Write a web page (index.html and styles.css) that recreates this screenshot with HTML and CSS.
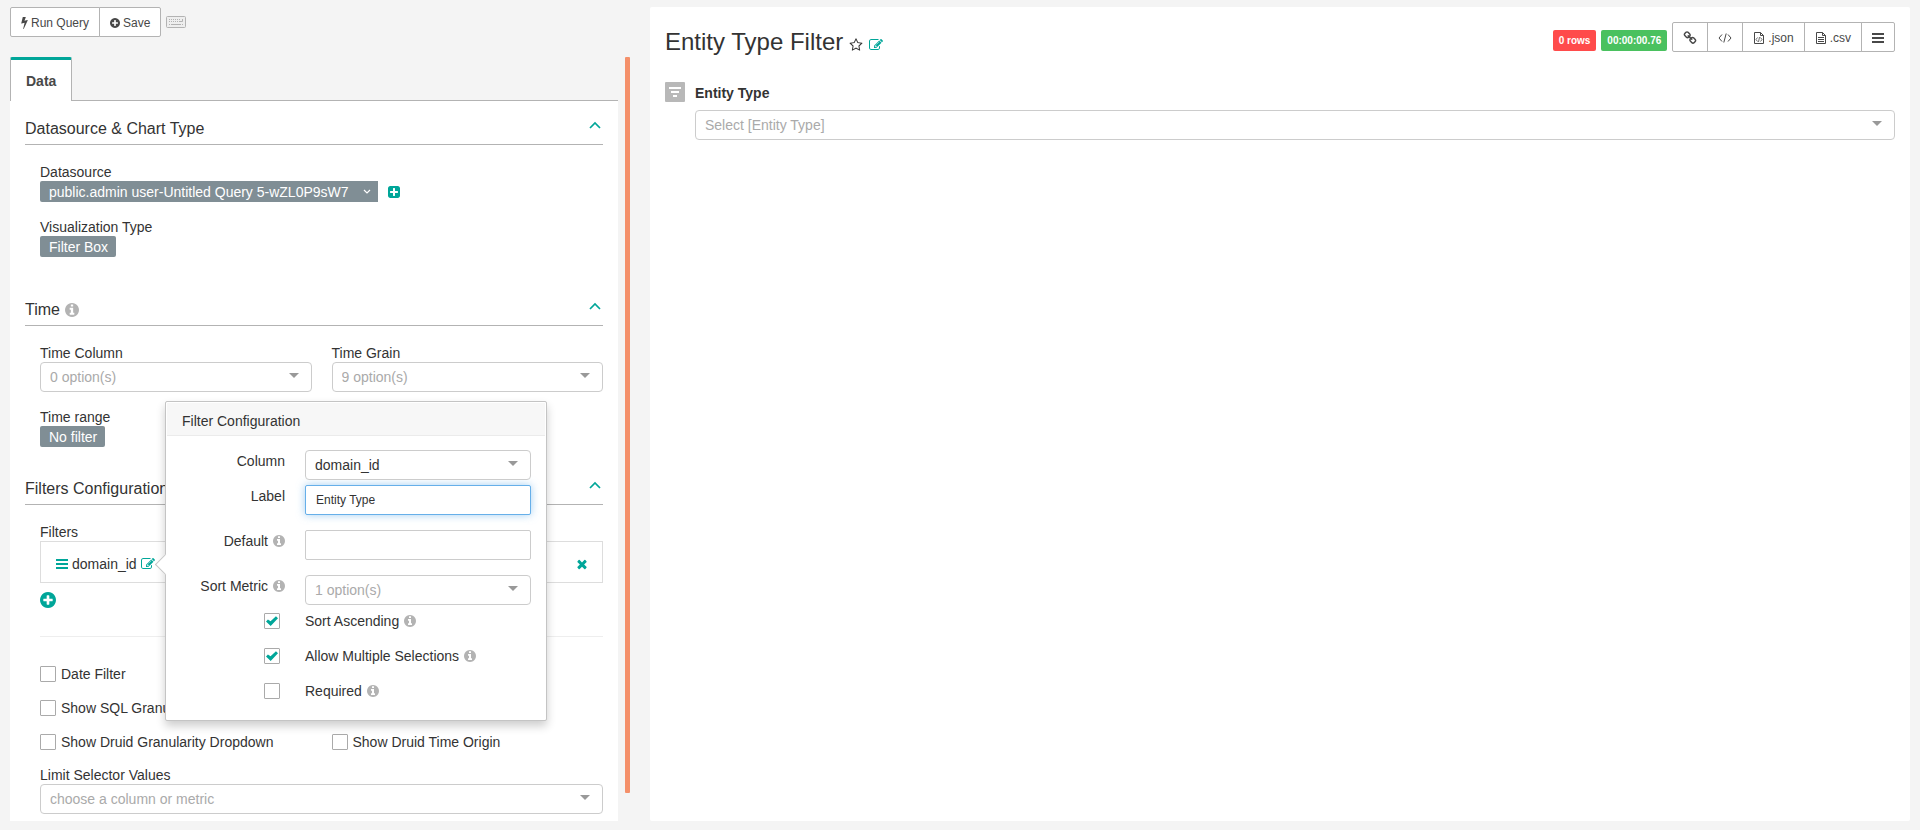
FILE: index.html
```html
<!DOCTYPE html>
<html lang="en">
<head>
<meta charset="utf-8">
<title>Entity Type Filter</title>
<link rel="stylesheet" href="styles.css">
</head>
<body>
<svg class="sprite" aria-hidden="true">
  <symbol id="i-bolt" viewBox="448 128 896 1664"><path d="M1333 566q18 20 7 44l-540 1157q-13 25-42 25-4 0-14-2-17-5-25.500-19t-4.500-30l197-808-406 101q-4 1-12 1-18 0-31-11-18-15-13-39l201-825q4-14 16-23t28-9h328q19 0 32 12.500t13 29.500q0 8-5 18l-171 463 396-98q8-2 12-2 19 0 34 15z"/></symbol>
  <symbol id="i-plus-circle" viewBox="128 128 1536 1536"><path d="M1344 960v-128q0-26-19-45t-45-19h-256v-256q0-26-19-45t-45-19h-128q-26 0-45 19t-19 45v256h-256q-26 0-45 19t-19 45v128q0 26 19 45t45 19h256v256q0 26 19 45t45 19h128q26 0 45-19t19-45v-256h256q26 0 45-19t19-45zm320-64q0 209-103 385.500t-279.500 279.500-385.500 103-385.500-103-279.500-279.500-103-385.500 103-385.500 279.500-279.500 385.500-103 385.500 103 279.500 279.500 103 385.500z"/></symbol>
  <symbol id="i-info" viewBox="128 128 1536 1536"><path d="M1152 1376v-160q0-14-9-23t-23-9h-96v-512q0-14-9-23t-23-9h-320q-14 0-23 9t-9 23v160q0 14 9 23t23 9h96v320h-96q-14 0-23 9t-9 23v160q0 14 9 23t23 9h448q14 0 23-9t9-23zm-128-896v-160q0-14-9-23t-23-9h-192q-14 0-23 9t-9 23v160q0 14 9 23t23 9h192q14 0 23-9t9-23zm640 416q0 209-103 385.500t-279.500 279.500-385.500 103-385.500-103-279.500-279.500-103-385.500 103-385.500 279.500-279.500 385.500-103 385.500 103 279.500 279.500 103 385.500z"/></symbol>
  <symbol id="i-plus-square" viewBox="128 128 1536 1536"><path d="M1408 960v-128q0-26-19-45t-45-19h-320v-320q0-26-19-45t-45-19h-128q-26 0-45 19t-19 45v320h-320q-26 0-45 19t-19 45v128q0 26 19 45t45 19h320v320q0 26 19 45t45 19h128q26 0 45-19t19-45v-320h320q26 0 45-19t19-45zm256-544v960q0 119-84.500 203.500t-203.500 84.500h-960q-119 0-203.500-84.500t-84.500-203.500v-960q0-119 84.500-203.500t203.500-84.500h960q119 0 203.500 84.500t84.500 203.500z"/></symbol>
  <symbol id="i-edit" viewBox="0 0 1792 1792"><path d="M888 1184l116-116-152-152-116 116v56h96v96h56zm440-720q-16-16-33 1l-350 350q-17 17-1 33t33-1l350-350q17-17 1-33zm80 594v190q0 119-84.500 203.500t-203.500 84.500h-832q-119 0-203.500-84.500t-84.500-203.500v-832q0-119 84.500-203.500t203.500-84.500h832q63 0 117 25 15 7 18 23 3 17-9 29l-49 49q-14 14-32 8-23-6-45-6h-832q-66 0-113 47t-47 113v832q0 66 47 113t113 47h832q66 0 113-47t47-113v-126q0-13 9-22l64-64q15-15 35-7t20 29zm-96-738l288 288-672 672h-288v-288zm444 132l-92 92-288-288 92-92q28-28 68-28t68 28l152 152q28 28 28 68t-28 68z"/></symbol>
  <symbol id="i-star" viewBox="0 0 1792 1792"><path d="M1201 1004l306-297-422-62-189-382-189 382-422 62 306 297-73 421 378-199 377 199zm527-357q0 22-26 48l-363 354 86 500q1 7 1 20 0 50-41 50-19 0-40-12l-449-236-449 236q-22 12-40 12-21 0-31.500-14.500t-10.500-35.500q0-6 2-20l86-500-364-354q-25-27-25-48 0-37 56-46l502-73 225-455q19-41 49-41t49 41l225 455 502 73q56 9 56 46z"/></symbol>
  <symbol id="i-times" viewBox="0 0 1792 1792"><path d="M1490 1322q0 40-28 68l-136 136q-28 28-68 28t-68-28l-294-294-294 294q-28 28-68 28t-68-28l-136-136q-28-28-28-68t28-68l294-294-294-294q-28-28-28-68t28-68l136-136q28-28 68-28t68 28l294 294 294-294q28-28 68-28t68 28l136 136q28 28 28 68t-28 68l-294 294 294 294q28 28 28 68z"/></symbol>
  <symbol id="i-link" viewBox="0 0 1792 1792"><path d="M1520 1216q0-40-28-68l-208-208q-28-28-68-28-42 0-72 32 3 3 19 18.500t21.500 21.500 15 19 13 25.500 3.500 27.500q0 40-28 68t-68 28q-15 0-27.500-3.500t-25.500-13-19-15-21.500-21.500-18.500-19q-33 31-33 73 0 40 28 68l206 207q27 27 68 27 40 0 68-26l147-146q28-28 28-67zm-703-705q0-40-28-68l-206-207q-28-28-68-28-39 0-68 27l-147 146q-28 28-28 67 0 40 28 68l208 208q27 27 68 27 42 0 72-31-3-3-19-18.500t-21.500-21.500-15-19-13-25.500-3.500-27.500q0-40 28-68t68-28q15 0 27.500 3.500t25.500 13 19 15 21.500 21.500 18.500 19q33-31 33-73zm895 705q0 120-85 203l-147 146q-83 83-203 83-121 0-204-85l-206-207q-83-83-83-203 0-123 88-209l-88-88q-86 88-208 88-120 0-204-84l-208-208q-84-84-84-204t85-203l147-146q83-83 203-83 121 0 204 85l206 207q83 83 83 203 0 123-88 209l88 88q86-88 208-88 120 0 204 84l208 208q84 84 84 204z"/></symbol>
  <symbol id="i-bars" viewBox="0 0 12 12"><path d="M0 1h12v2H0zM0 5h12v2H0zM0 9h12v2H0z"/></symbol>
  <symbol id="i-code" viewBox="0 0 14 12"><path d="M4 2.500L1 6l3 3.500M10 2.500L13 6l-3 3.500M8.200 1.500L5.800 10.500" fill="none" stroke="currentColor"/></symbol>
  <symbol id="i-file-code" viewBox="0 0 12 14"><path d="M1.500 1.500h6l3 3v8h-9zM7.500 1.500v3h3" fill="none" stroke="currentColor"/><path d="M4.500 6.500L3 8.500l1.500 2M7.500 6.500l1.500 2-1.500 2M6.500 6L5.500 11" fill="none" stroke="currentColor" stroke-width=".8"/></symbol>
  <symbol id="i-file-text" viewBox="0 0 12 14"><path d="M1.500 1.500h6l3 3v8h-9zM7.500 1.500v3h3M3 6.500h6M3 8.500h6M3 10.500h6" fill="none" stroke="currentColor"/></symbol>
  <symbol id="i-keyboard" viewBox="0 0 20 12"><rect x=".5" y=".5" width="19" height="11" rx="1" fill="#eee" stroke="currentColor"/><path d="M3 3.500h12M3 5.500h12" fill="none" stroke="currentColor" stroke-dasharray="1 1"/><path d="M3 8.500h1M5 8.500h10M16 8.500h1M14 5.500h2.500V3" fill="none" stroke="currentColor"/></symbol>
  <symbol id="i-up" viewBox="0 0 12 8"><path d="M1 7l5-5 5 5" fill="none" stroke="currentColor" stroke-width="1.700"/></symbol>
  <symbol id="i-down" viewBox="0 0 8 6"><path d="M1 1l3 3 3-3" fill="none" stroke="currentColor" stroke-width="1.200"/></symbol>
  <symbol id="i-filter" viewBox="0 0 20 20"><rect width="20" height="20" rx="1" fill="#b8b8b8"/><path d="M4 5h12v2H4zM6 9h8v2H6zM8 13h4v2H8z" fill="#fff"/></symbol>
</svg>

<main class="explore">
  <section class="controls">
    <div class="toolbar">
      <div class="btn-group">
        <button class="btn" type="button"><svg class="icon bolt"><use href="#i-bolt"/></svg>Run Query</button>
        <button class="btn" type="button"><svg class="icon sm"><use href="#i-plus-circle"/></svg>Save</button>
      </div>
      <svg class="keyboard"><use href="#i-keyboard"/></svg>
    </div>

    <div class="control-area">
      <div class="tabs">
        <div class="tab-list" role="tablist">
          <button class="tab" type="button" role="tab" aria-selected="true">Data</button>
        </div>

        <div class="tab-content" role="tabpanel">
          <section class="panel datasource">
            <h2 class="panel-head">Datasource &amp; Chart Type<svg class="chevron"><use href="#i-up"/></svg></h2>
            <div class="panel-body">
              <div class="field">
                <span class="caption">Datasource</span>
                <div class="source-row">
                  <button class="tag tag-menu" type="button">public.admin user-Untitled Query 5-wZL0P9sW7<svg class="caret"><use href="#i-down"/></svg></button>
                  <button class="icon-btn" type="button" aria-label="Add"><svg class="icon"><use href="#i-plus-square"/></svg></button>
                </div>
              </div>
              <div class="field">
                <span class="caption">Visualization Type</span>
                <button class="tag" type="button">Filter Box</button>
              </div>
            </div>
          </section>

          <section class="panel time">
            <h2 class="panel-head"><span class="with-info">Time<svg class="icon lg info"><use href="#i-info"/></svg></span><svg class="chevron"><use href="#i-up"/></svg></h2>
            <div class="panel-body">
              <div class="columns">
                <div class="field">
                  <label class="caption" for="time-col">Time Column</label>
                  <div class="select"><select id="time-col"><option>0 option(s)</option></select></div>
                </div>
                <div class="field">
                  <label class="caption" for="time-grain">Time Grain</label>
                  <div class="select"><select id="time-grain"><option>9 option(s)</option></select></div>
                </div>
              </div>
              <div class="field">
                <span class="caption">Time range</span>
                <button class="tag" type="button">No filter</button>
              </div>
            </div>
          </section>

          <section class="panel filters">
            <h2 class="panel-head">Filters Configuration<svg class="chevron"><use href="#i-up"/></svg></h2>
            <div class="panel-body">
              <div class="filter-list">
                <span class="caption">Filters</span>
                <div class="filter-item">
                  <svg class="bars teal"><use href="#i-bars"/></svg>
                  <span>domain_id</span>
                  <button class="icon-btn" type="button" aria-label="Edit filter"><svg class="icon lg"><use href="#i-edit"/></svg></button>
                  <button class="icon-btn remove" type="button" aria-label="Remove filter"><svg class="icon lg"><use href="#i-times"/></svg></button>

                  <div class="popover" role="dialog" aria-labelledby="pop-title">
                    <h3 class="popover-title" id="pop-title">Filter Configuration</h3>
                    <form class="popover-body">
                      <div class="form-row tight">
                        <label for="f-col">Column</label>
                        <div class="select chosen"><select id="f-col"><option>domain_id</option></select></div>
                      </div>
                      <div class="form-row">
                        <label for="f-label">Label</label>
                        <input class="text active" id="f-label" type="text" value="Entity Type">
                      </div>
                      <div class="form-row">
                        <label for="f-default">Default<svg class="icon info"><use href="#i-info"/></svg></label>
                        <input class="text" id="f-default" type="text">
                      </div>
                      <div class="form-row">
                        <label for="f-sort">Sort Metric<svg class="icon info"><use href="#i-info"/></svg></label>
                        <div class="select"><select id="f-sort"><option>1 option(s)</option></select></div>
                      </div>
                      <div class="checks">
                        <div class="check-row"><input class="check" id="f-asc" type="checkbox" checked><label for="f-asc">Sort Ascending<svg class="icon info"><use href="#i-info"/></svg></label></div>
                        <div class="check-row"><input class="check" id="f-multi" type="checkbox" checked><label for="f-multi">Allow Multiple Selections<svg class="icon info"><use href="#i-info"/></svg></label></div>
                        <div class="check-row"><input class="check" id="f-req" type="checkbox"><label for="f-req">Required<svg class="icon info"><use href="#i-info"/></svg></label></div>
                      </div>
                    </form>
                  </div>
                </div>
                <button class="icon-btn add" type="button" aria-label="Add filter"><svg class="icon xl"><use href="#i-plus-circle"/></svg></button>
              </div>
              <hr class="rule">
              <div class="options">
                <label class="option"><input class="check" type="checkbox">Date Filter</label>
                <label class="option"><input class="check" type="checkbox">Show SQL Granularity Dropdown</label>
                <div class="columns">
                  <label class="option"><input class="check" type="checkbox">Show Druid Granularity Dropdown</label>
                  <label class="option"><input class="check" type="checkbox">Show Druid Time Origin</label>
                </div>
                <div class="field">
                  <label class="caption" for="limit">Limit Selector Values</label>
                  <div class="select"><select id="limit"><option>choose a column or metric</option></select></div>
                </div>
              </div>
            </div>
          </section>
        </div>
      </div>
      <div class="stale-bar"></div>
    </div>
  </section>

  <section class="chart">
    <header class="chart-head">
      <div class="title">
        <h1>Entity Type Filter</h1>
        <svg class="icon lg"><use href="#i-star"/></svg>
        <button class="icon-btn" type="button" aria-label="Edit chart"><svg class="icon lg"><use href="#i-edit"/></svg></button>
      </div>
      <div class="actions">
        <span class="badge red">0 rows</span>
        <span class="badge green">00:00:00.76</span>
        <div class="btn-group">
          <button class="btn" type="button" aria-label="Short link"><svg class="icon lg"><use href="#i-link"/></svg></button>
          <button class="btn" type="button" aria-label="Embed"><svg class="code"><use href="#i-code"/></svg></button>
          <a class="btn" href="#json"><svg class="file"><use href="#i-file-code"/></svg>.json</a>
          <a class="btn" href="#csv"><svg class="file"><use href="#i-file-text"/></svg>.csv</a>
          <button class="btn" type="button" aria-label="Menu"><svg class="bars"><use href="#i-bars"/></svg></button>
        </div>
      </div>
    </header>
    <div class="filter-box">
      <svg class="filter-icon"><use href="#i-filter"/></svg>
      <div class="filter-field">
        <label for="entity">Entity Type</label>
        <div class="select"><select id="entity"><option>Select [Entity Type]</option></select></div>
      </div>
    </div>
  </section>
</main>
</body>
</html>
```
FILE: styles.css
```css
* { box-sizing: border-box; }

body {
  margin: 0;
  background: #f4f4f4;
  color: #333;
  font: 14px/18px "Liberation Sans", Arial, sans-serif;
}

button, input, select { font: inherit; color: inherit; }
button { cursor: pointer; }
svg { display: block; flex: none; fill: currentColor; }
h1, h2, h3 { margin: 0; font-weight: 400; }
.sprite { position: absolute; width: 0; height: 0; }

.icon { width: 12px; height: 12px; }
.icon.bolt { width: 7px; height: 12px; }
.icon.sm { width: 10px; height: 10px; }
.icon.lg { width: 14px; height: 14px; }
.icon.xl { width: 16px; height: 16px; }
.info { color: #b3b3b3; }
.bars { width: 12px; height: 12px; }
.code { width: 14px; height: 12px; }
.file { width: 12px; height: 14px; }
.teal { color: #00a699; }
.icon-btn {
  padding: 0;
  border: 0;
  background: none;
  color: #00a699;
}

.explore {
  display: flex;
  min-height: 100vh;
  padding: 7px 10px 9px 0;
}
.controls {
  display: flex;
  flex: 0 0 640px;
  flex-direction: column;
  gap: 20px;
  padding: 0 10px;
}

.toolbar { display: flex; align-items: center; gap: 5px; }
.keyboard { width: 20px; height: 12px; color: #b3b3b3; }
.btn-group { display: flex; }
.btn {
  display: flex;
  align-items: center;
  gap: 3px;
  height: 30px;
  padding: 1px 10px 0;
  border: 1px solid #b3b3b3;
  background: #fff;
  color: #484848;
  font-size: 12px;
  text-decoration: none;
}
.btn + .btn { margin-left: -1px; }
.btn:first-child { border-radius: 2px 0 0 2px; }
.btn:last-child { border-radius: 0 2px 2px 0; }

.control-area { display: flex; flex: 1; gap: 7px; padding-right: 10px; }
.tabs { display: flex; flex: 1; flex-direction: column; }
.stale-bar {
  width: 5px;
  margin: 0 -10px 28px 0;
  border-radius: 1px;
  background: #f4906a;
}
.tab-list { display: flex; }
.tab {
  height: 44px;
  margin-bottom: -1px;
  padding: 0 15px;
  border: 1px solid #b3b3b3;
  border-width: 3px 1px 0;
  border-top-color: #00a699;
  border-radius: 2px 2px 0 0;
  background: #fff;
  color: #484848;
  font-weight: 700;
  z-index: 1;
}
.tab-content {
  flex: 1;
  padding: 0 15px 7px;
  border-top: 1px solid #b3b3b3;
  background: #fff;
}

.panel { padding-top: 17px; }
.panel.datasource { padding-bottom: 25px; }
.panel.time { padding-bottom: 14px; }
.panel-head {
  display: flex;
  align-items: center;
  justify-content: space-between;
  padding-bottom: 4px;
  border-bottom: 1px solid #b3b3b3;
  font-size: 16px;
  line-height: 22px;
}
.with-info { display: flex; align-items: center; gap: 5px; }
.chevron { width: 12px; height: 8px; margin: 0 2px 8px 0; color: #00a699; }
.panel-body {
  display: flex;
  flex-direction: column;
  gap: 16px;
  padding: 18px 0 0 15px;
}
.columns { display: grid; grid-template-columns: 1fr 1fr; gap: 20px; }
.field { display: flex; flex-direction: column; align-items: flex-start; }
.source-row { display: flex; align-items: center; gap: 10px; }
.tag {
  display: flex;
  align-items: center;
  height: 21px;
  padding: 0 8px 0 9px;
  border: 0;
  border-radius: 2px;
  background: #808e95;
  color: #fff;
}
.tag-menu { gap: 14px; padding-right: 7px; border-radius: 2px 0 0 2px; }
.caret { width: 8px; height: 6px; }

.select { position: relative; width: 100%; color: #aaa; }
.select.chosen { color: #333; }
.select select {
  display: block;
  width: 100%;
  height: 30px;
  padding: 0 30px 0 9px;
  border: 1px solid #ccc;
  border-radius: 4px;
  appearance: none;
  background: #fff;
}
.select::after {
  content: "";
  position: absolute;
  top: 11px;
  right: 13px;
  border: 5px solid transparent;
  border-top-color: #999;
  border-bottom-width: 0;
}

.filter-list { display: flex; flex-direction: column; align-items: flex-start; }
.filter-item {
  position: relative;
  display: flex;
  align-items: center;
  gap: 4px;
  width: 100%;
  height: 42px;
  padding: 3px 13px 0 15px;
  border: 1px solid #ddd;
}
.filter-item .remove { margin-left: auto; }
.add { margin-top: 9px; }
.rule {
  width: 100%;
  margin: 12px 0;
  border: 0;
  border-top: 1px solid #eee;
}
.options { display: flex; flex-direction: column; gap: 16px; }
.options .caption { line-height: 17px; }
.option { display: flex; align-items: center; gap: 5px; }
.check {
  display: grid;
  place-items: center;
  flex: none;
  width: 16px;
  height: 16px;
  margin: 0;
  border: 1px solid #aaa;
  border-radius: 1px;
  appearance: none;
  background: #fff;
}
.check:checked::before {
  content: "";
  width: 12px;
  height: 10px;
  background: #00a699;
  clip-path: polygon(0 54%, 16% 34%, 38% 52%, 83% 2%, 100% 22%, 39% 100%);
}

.popover {
  position: absolute;
  top: -141px;
  left: 124px;
  z-index: 5;
  width: 382px;
  padding: 1px;
  border: 1px solid #c4c4c4;
  border-radius: 2px;
  background: #fff;
  box-shadow: 0 5px 10px rgba(0, 0, 0, .2);
}
.popover::before {
  content: "";
  position: absolute;
  top: 155px;
  left: -8px;
  width: 14px;
  height: 14px;
  border: 1px solid #c4c4c4;
  border-width: 0 0 1px 1px;
  background: #fff;
  transform: rotate(45deg);
}
.popover-title {
  padding: 9px 15px 5px;
  border-bottom: 1px solid #ebebeb;
  background: #f7f7f7;
  font-size: 14px;
}
.popover-body { padding: 14px 14px 19px; }
.form-row, .check-row {
  display: grid;
  grid-template-columns: minmax(0, 1fr) 226px;
  column-gap: 20px;
}
.form-row { margin-bottom: 15px; }
.form-row.tight { margin-bottom: 5px; }
.form-row label, .check-row label { display: flex; align-items: center; gap: 5px; }
.form-row label { align-self: start; justify-content: flex-end; padding-top: 2px; }
.text {
  width: 100%;
  height: 30px;
  padding: 0 10px;
  border: 1px solid #ccc;
  border-radius: 2px;
  outline: 0;
  background: #fff;
  font-size: 12px;
}
.text.active { border-color: #66afe9; box-shadow: 0 0 8px rgba(102, 175, 233, .6); }
.checks { display: grid; gap: 17px; margin-top: -8px; }
.check-row { align-items: center; }
.check-row .check { justify-self: end; margin-right: 5px; }

.chart {
  flex: 1;
  margin-left: 10px;
  padding: 15px;
  border-radius: 2px;
  background: #fff;
}
.chart-head { display: flex; justify-content: space-between; }
.title { display: flex; align-items: center; gap: 6px; padding-top: 5px; }
.title .icon { margin-top: 6px; }
.title h1 { font-size: 24px; line-height: 30px; }
.actions { display: flex; align-items: flex-start; gap: 5px; }
.badge {
  margin-top: 8px;
  padding: 0 6px;
  border-radius: 2px;
  color: #fff;
  font-size: 10px;
  font-weight: 700;
  line-height: 21px;
}
.red { background: #ff4b4b; }
.green { background: #4ac15f; }
.filter-box { display: flex; gap: 10px; padding-top: 25px; }
.filter-icon { width: 20px; height: 20px; }
.filter-field { display: grid; flex: 1; gap: 8px; padding-top: 2px; font-weight: 700; }
.filter-field .select { font-weight: 400; }
```
